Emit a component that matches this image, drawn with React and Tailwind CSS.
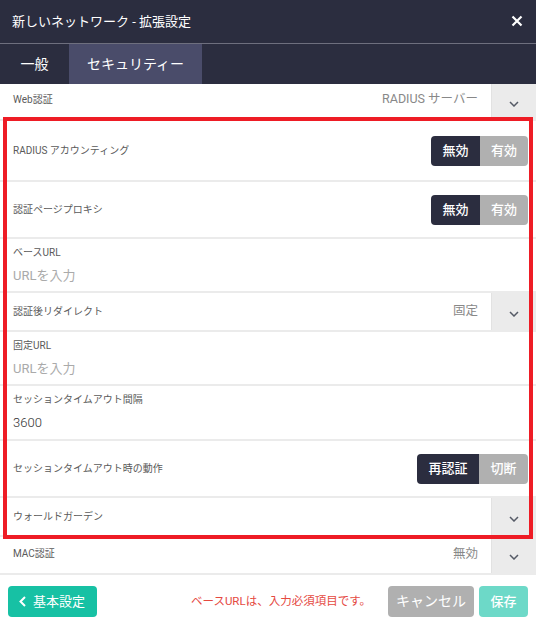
import React, { useState } from "react";

const font = { fontFamily: '"Roboto", "Noto Sans CJK JP", sans-serif' };

function Chevron() {
  return (
    <svg width="10" height="6" viewBox="0 0 10 6" fill="none">
      <polyline points="1,1 5,5 9,1" stroke="#555a66" strokeWidth="1.5" />
    </svg>
  );
}

function DropCell() {
  return (
    <div className="w-[45px] self-stretch flex items-center justify-center bg-[#ebebeb] border-l border-[#e2e2e2]">
      <div className="mt-[4px]">
        <Chevron />
      </div>
    </div>
  );
}

function Toggle({ options, value, widths }) {
  return (
    <div className="flex rounded-[4px] overflow-hidden h-[30px]">
      {options.map((o, i) => (
        <div
          key={o}
          className={
            "flex items-center justify-center text-[13px] font-medium " +
            (widths[i] || "") +
            " " +
            (value === i ? "bg-[#2b2d3f] text-white" : "bg-[#b0b0b0] text-white")
          }
        >
          {o}
        </div>
      ))}
    </div>
  );
}

function Label({ children }) {
  return <div className="text-[10px] text-[#5a5a5a] leading-none">{children}</div>;
}

export default function App() {
  const [tab, setTab] = useState(1);

  return (
    <div className="relative w-[536px] h-[628px] bg-white overflow-hidden" style={font}>
      <div className="h-[44px] bg-[#2b2d3f] flex items-center justify-between pl-[12px] pr-[12px] border-b border-[#6e6f7e]">
        <div className="text-white text-[13px]">新しいネットワーク - 拡張設定</div>
        <svg width="12" height="12" viewBox="0 0 12 12" className="mr-[1px] mb-[2px]">
          <path d="M1.5 1.5 L10.5 10.5 M10.5 1.5 L1.5 10.5" stroke="white" strokeWidth="2.2" />
        </svg>
      </div>

      <div className="h-[40px] bg-[#2b2d3f] flex">
        <button
          onClick={() => setTab(0)}
          className={"w-[69px] text-[14px] text-white " + (tab === 0 ? "bg-[#4a4c6a]" : "")}
        >
          一般
        </button>
        <button
          onClick={() => setTab(1)}
          className={"w-[133px] text-[14px] text-white " + (tab === 1 ? "bg-[#4a4c6a]" : "")}
        >
          セキュリティー
        </button>
      </div>

      <div className="flex items-stretch h-[37px] border-b-2 border-[#ebebeb]">
        <div className="flex-1 flex items-center justify-between pl-[13px] pr-[13px] pb-[4px]">
          <Label>Web認証</Label>
          <span className="text-[12.5px] text-[#888]">RADIUS サーバー</span>
        </div>
        <DropCell />
      </div>

      <div className="flex items-center justify-between h-[61px] border-b-2 border-[#ebebeb] pl-[13px] pr-[8px]">
        <Label>RADIUS アカウンティング</Label>
        <Toggle options={["無効", "有効"]} value={0} widths={["w-[49px]", "w-[48px]"]} />
      </div>

      <div className="flex items-center justify-between h-[57px] border-b-2 border-[#ebebeb] pl-[13px] pr-[8px]">
        <Label>認証ページプロキシ</Label>
        <Toggle options={["無効", "有効"]} value={0} widths={["w-[49px]", "w-[48px]"]} />
      </div>

      <div className="flex flex-col h-[54px] border-b-2 border-[#ebebeb] pl-[13px] pt-[9px]">
        <Label>ベースURL</Label>
        <input
          className="mt-[8px] text-[13px] text-[#333] placeholder-[#aaa] outline-none bg-transparent"
          placeholder="URLを入力"
        />
      </div>

      <div className="flex items-stretch h-[39px] border-b-2 border-[#ebebeb]">
        <div className="flex-1 flex items-center justify-between pl-[13px] pr-[13px]">
          <Label>認証後リダイレクト</Label>
          <span className="text-[12.5px] text-[#888]">固定</span>
        </div>
        <DropCell />
      </div>

      <div className="flex flex-col h-[54px] border-b-2 border-[#ebebeb] pl-[13px] pt-[9px]">
        <Label>固定URL</Label>
        <input
          className="mt-[8px] text-[13px] text-[#333] placeholder-[#aaa] outline-none bg-transparent"
          placeholder="URLを入力"
        />
      </div>

      <div className="flex flex-col h-[55px] border-b-2 border-[#ebebeb] pl-[13px] pt-[9px]">
        <Label>セッションタイムアウト間隔</Label>
        <input
          className="mt-[8px] text-[13px] font-light text-[#333] outline-none bg-transparent"
          defaultValue="3600"
        />
      </div>

      <div className="flex items-center justify-between h-[57px] border-b-2 border-[#ebebeb] pl-[13px] pr-[8px]">
        <Label>セッションタイムアウト時の動作</Label>
        <Toggle options={["再認証", "切断"]} value={0} widths={["w-[62px]", "w-[49px]"]} />
      </div>

      <div className="flex items-stretch h-[39px] border-b-2 border-[#ebebeb]">
        <div className="flex-1 flex items-center pl-[13px]">
          <Label>ウォールドガーデン</Label>
        </div>
        <DropCell />
      </div>

      <div className="flex items-stretch h-[38px] border-b-2 border-[#ebebeb]">
        <div className="flex-1 flex items-center justify-between pl-[13px] pr-[13px] pb-[2px]">
          <Label>MAC認証</Label>
          <span className="text-[12.5px] text-[#888]">無効</span>
        </div>
        <DropCell />
      </div>

      <div className="flex items-center h-[53px] pl-[8px] pr-[8px]">
        <button className="flex items-center gap-[7px] h-[31px] w-[89px] pl-[11px] rounded-[4px] bg-[#17c1a4] text-white text-[13px]">
          <svg width="7" height="11" viewBox="0 0 7 11">
            <polyline points="6,1 1.5,5.5 6,10" fill="none" stroke="white" strokeWidth="2" />
          </svg>
          基本設定
        </button>
        <span className="ml-auto mr-[17px] text-[11.5px] text-[#e5493f]">ベースURLは、入力必須項目です。</span>
        <button className="h-[31px] w-[86px] rounded-[4px] bg-[#b0b0b0] text-white text-[14px]">
          キャンセル
        </button>
        <button className="ml-[5px] h-[31px] w-[49px] rounded-[4px] bg-[#6dd9c8] text-white text-[13px] font-medium">
          保存
        </button>
      </div>

      <div className="absolute left-[3px] top-[117px] w-[530px] h-[422px] border-4 border-[#ee1c25] pointer-events-none" />
    </div>
  );
}
